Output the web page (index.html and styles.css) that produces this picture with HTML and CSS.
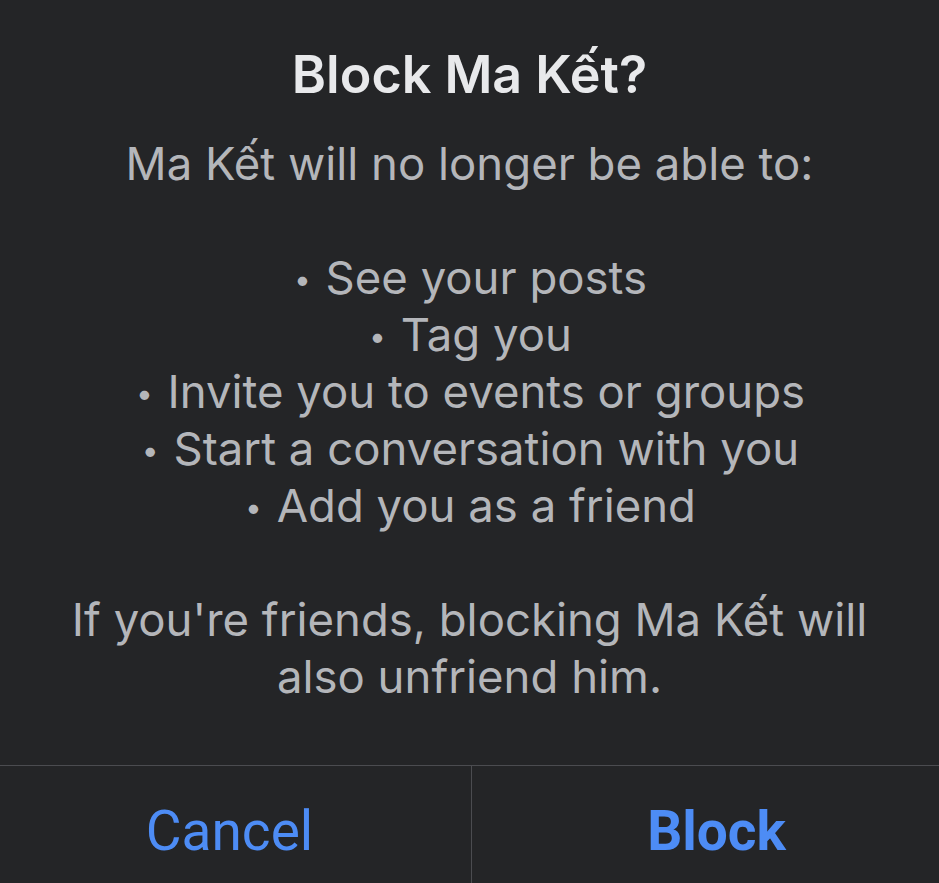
FILE: index.html
```html
<!DOCTYPE html>
<html lang="en">
  <head>
    <meta charset="UTF-8" />
    <title>Block Ma Kết?</title>
    <link rel="stylesheet" href="styles.css">
  </head>
  <body>
    <div class="dialog">
      <div class="content">
        <div class="title">Block Ma Kết?</div>
        <div class="message">
          <p>Ma Kết will no longer be able to:</p>
          <ul>
            <li><span class="dot">•</span> See your posts</li>
            <li><span class="dot">•</span> Tag you</li>
            <li><span class="dot">•</span> Invite you to events or groups</li>
            <li><span class="dot">•</span> Start a conversation with you</li>
            <li><span class="dot">•</span> Add you as a friend</li>
          </ul>
          <p>If you're friends, blocking Ma Kết will<br>also unfriend him.</p>
        </div>
      </div>
      <div class="actions">
        <button class="action cancel">Cancel</button>
        <button class="action block">Block</button>
      </div>
    </div>
  </body>
</html>
```

FILE: styles.css
```css
body {
  margin: 0;
  font-family: Inter, "Noto Sans", sans-serif;
  background: #242527;
  height: 100vh;
  overflow: hidden;
}
.dialog {
  display: flex;
  flex-direction: column;
  height: 100%;
}
.content {
  flex-grow: 1;
  padding-top: 46px;
  text-align: center;
}
.title {
  color: #e8e9eb;
  font-size: 52px;
  font-weight: 600;
  line-height: 57px;
  margin-bottom: 32px;
}
.message {
  color: #b4b6ba;
  font-size: 45.5px;
  line-height: 57px;
}
.message p {
  margin: 0;
}
.message ul {
  list-style: none;
  margin: 57px 0;
  padding: 0;
}
.dot {
  display: inline-block;
  font-size: 30px;
  line-height: 30px;
  vertical-align: 4px;
  padding: 0 2px;
}
.actions {
  display: flex;
  height: 117px;
  border-top: 1px solid #4b4c50;
}
button {
  background: transparent;
  border: none;
  cursor: pointer;
  font-family: Roboto, "Liberation Sans", sans-serif;
}
.action {
  color: #4d8cf5;
  font-size: 55px;
  padding: 12px 0 0;
}
.cancel {
  width: 472px;
  padding-right: 12px;
  border-right: 1px solid #4b4c50;
}
.block {
  flex: 1;
  padding-left: 22px;
  font-weight: 700;
}
```
